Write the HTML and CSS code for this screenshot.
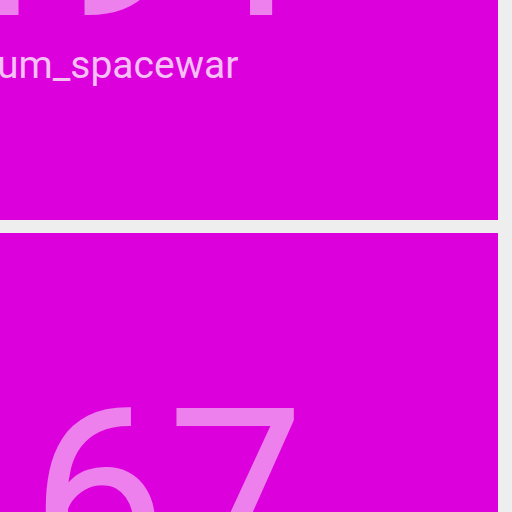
FILE: index.html
```html
<!DOCTYPE html>
<html>
<head>
<meta charset="utf-8">
<link rel="stylesheet" href="styles.css">
</head>
<body>
<main class="list">
  <section class="card card-top">
    <div class="count">491</div>
    <div class="label">um_spacewar</div>
  </section>
  <section class="card card-bottom">
    <div class="count">67</div>
  </section>
</main>
</body>
</html>
```
FILE: styles.css
```css
html, body {
  margin: 0;
  padding: 0;
  background: #eeeeee;
  overflow: hidden;
  font-family: Roboto, "Liberation Sans", sans-serif;
}
.list {
  display: flex;
  flex-direction: column;
  gap: 13px;
  padding-right: 14px;
  margin-top: -300px;
}
.card {
  background: #dc00dc;
  overflow: hidden;
  display: flex;
  flex-direction: column;
}
.card-top {
  height: 520px;
}
.count {
  font-size: 244px;
  line-height: 1;
  color: rgba(255, 255, 255, 0.5);
  white-space: nowrap;
}
.card-top .count {
  margin-top: 110px;
  margin-left: -89px;
}
.label {
  font-size: 39px;
  line-height: 1;
  color: rgba(255, 255, 255, 0.75);
  margin-top: -8px;
  margin-left: -3px;
}
.card-bottom {
  height: 400px;
  padding-left: 30px;
}
.card-bottom .count {
  margin-top: 143px;
}
```
